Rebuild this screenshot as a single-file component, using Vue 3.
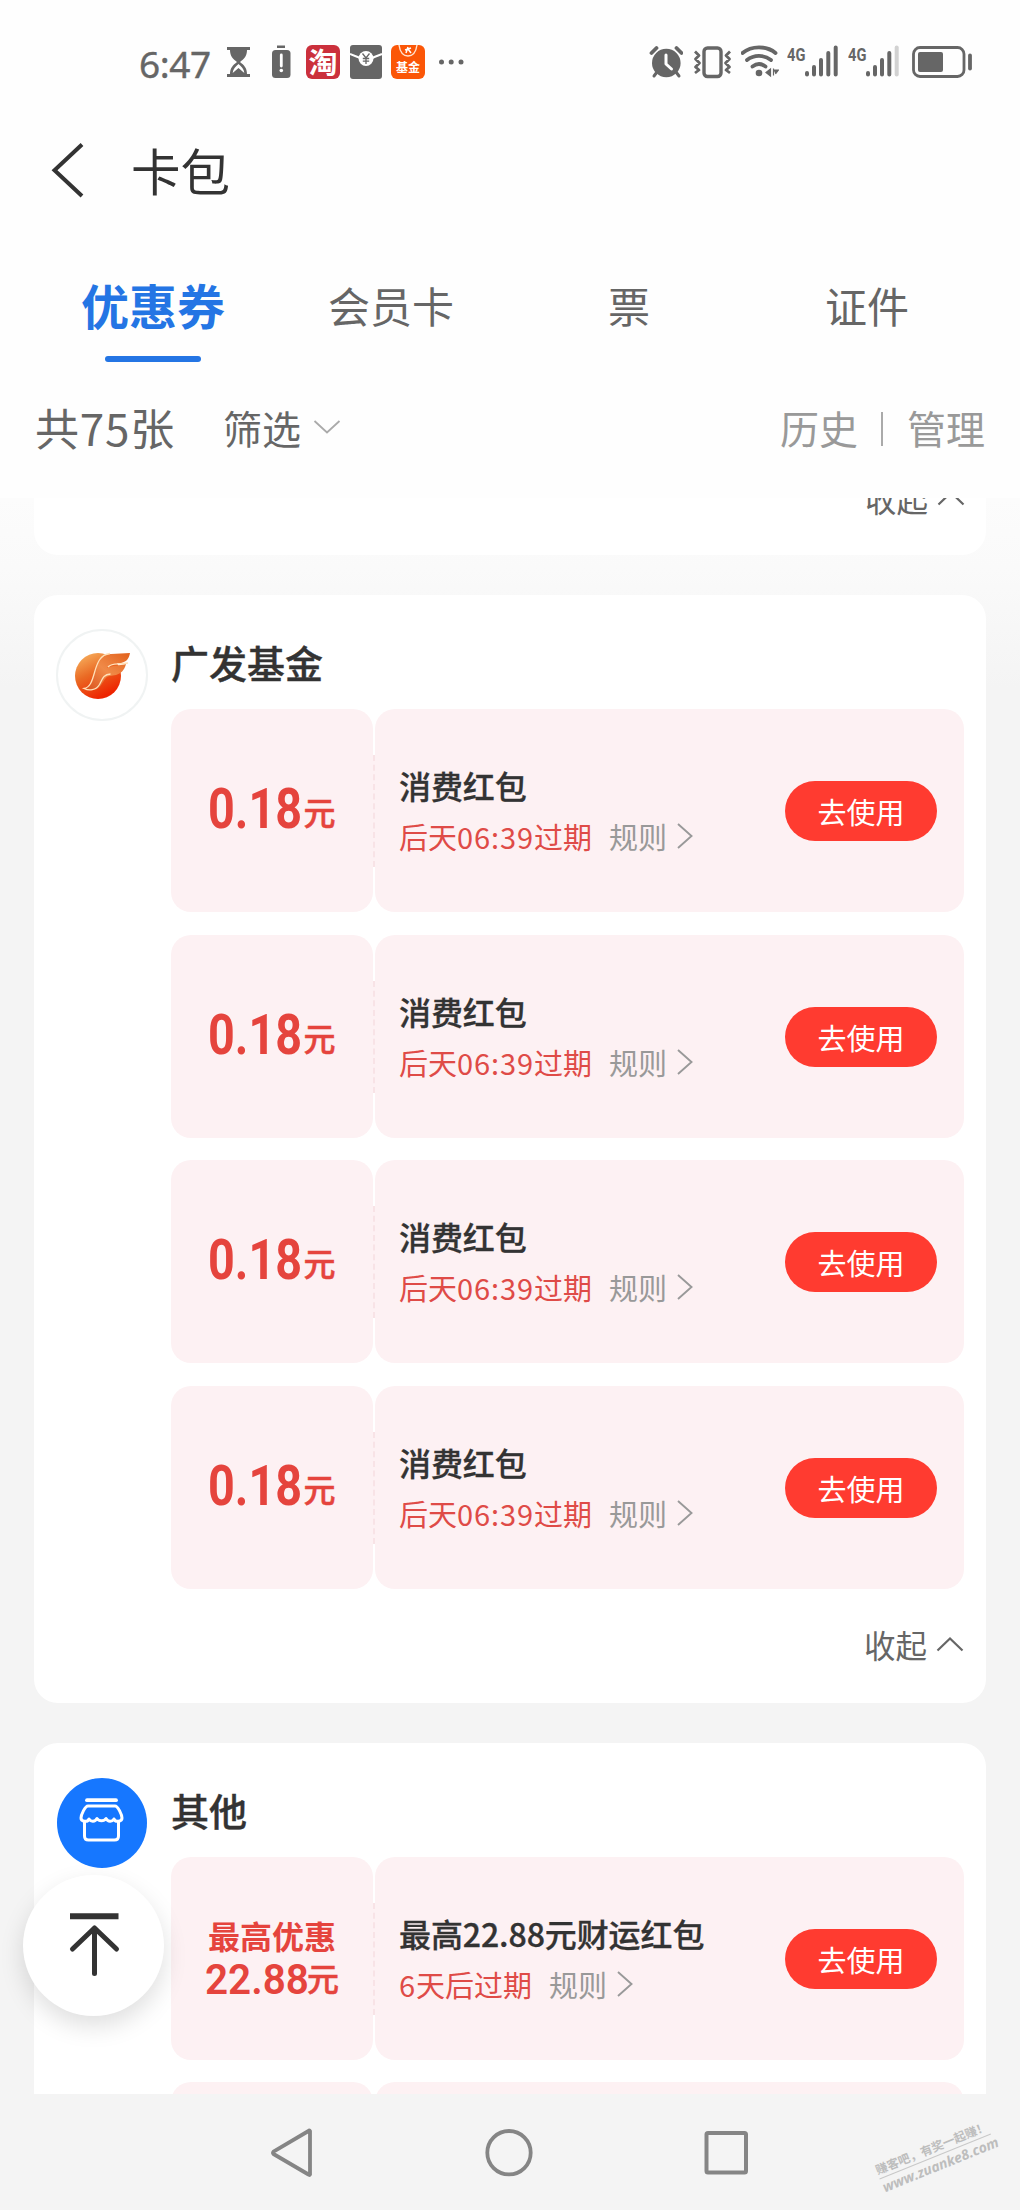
<script setup>
const tabs = ['优惠券', '会员卡', '票', '证件']
const fundCoupons = Array.from({ length: 4 }, () => ({
  amount: '0.18',
  title: '消费红包',
  expiry: ['后天', '06:39', '过期'],
}))
const groups = [
  { name: '广发基金', logo: 'fund', coupons: fundCoupons, foldable: true },
  {
    name: '其他',
    logo: 'shop',
    coupons: [
      { label: '最高优惠', amount: '22.88', title: '最高22.88元财运红包', expiry: ['', '6', '天后过期'] },
      { pending: true },
    ],
    foldable: false,
  },
]
</script>

<template>
  <div class="screen">
    <header class="status">
      <div class="status-left">
        <span class="time">6:47</span>
        <svg class="hourglass" width="24" height="34" viewBox="227 46 24 34">
          <path d="M227 48h23v3h-23zM227 75h23v3h-23z" fill="#666" />
          <path d="M230 51h17c0 6-3 9-7 12 4 3 7 6 7 12h-17c0-6 3-9 7-12-4-3-7-6-7-12z" fill="#666" />
          <path d="M238.500 65c-3 2.500-5.500 5-5.800 9l5.800-5 5.800 5c-.3-4-2.800-6.500-5.800-9z" fill="#fff" />
        </svg>
        <svg class="lowbat" width="20" height="34" viewBox="271 46 20 34">
          <rect x="277" y="46.500" width="8" height="2.500" fill="#666" />
          <rect x="272" y="51" width="18.500" height="28" rx="3.500" fill="#666" />
          <path d="M281.300 56v11" stroke="#fff" stroke-width="2.800" stroke-linecap="round" />
          <circle cx="281.300" cy="71.500" r="1.800" fill="#fff" />
        </svg>
        <span class="app tao">淘</span>
        <svg class="envelope" width="33" height="34" viewBox="350 45 33 34">
          <rect x="350" y="45" width="32" height="34" rx="3" fill="#666" />
          <path d="M350 54q8 3 12 5M382 54q-8 3-12 5" stroke="#fff" stroke-width="2" fill="none" />
          <circle cx="366" cy="58.500" r="7.500" fill="#fff" />
          <path d="M362.500 53.500l3.500 4.500 3.500-4.500M366 58v6M362.800 58.500h6.400M362.800 61.200h6.400" stroke="#666" stroke-width="1.300" fill="none" />
        </svg>
        <span class="app fund">
          <svg width="20" height="13" viewBox="0 0 20 13">
            <path d="M1 0c1 7 4 11 9 11s8-4 9-11" fill="none" stroke="#ffe3d0" stroke-width="1.400" />
            <path d="M7 5l6-2M10 2l-2 6M10 4l3 4" stroke="#fff" stroke-width="1.500" />
          </svg>
          <span>基金</span>
        </span>
        <svg class="more" width="26" height="8" viewBox="439 58 26 8">
          <circle cx="441.500" cy="62" r="2.500" fill="#666" /><circle cx="451.200" cy="62" r="2.500" fill="#666" /><circle cx="461" cy="62" r="2.500" fill="#666" />
        </svg>
      </div>
      <div class="status-right">
        <svg width="34" height="34" viewBox="650 46 34 34">
          <circle cx="667.300" cy="64" r="14.300" fill="#666" />
          <path d="M652.500 54l5-5M682.500 54l-5-5" stroke="#666" stroke-width="3.800" stroke-linecap="round" />
          <path d="M658 73l-3 4M677 73l3 4" stroke="#666" stroke-width="3" stroke-linecap="round" />
          <path d="M667 56v9l5.500 5" stroke="#fff" stroke-width="3" stroke-linecap="round" stroke-linejoin="round" fill="none" />
        </svg>
        <svg class="vibrate" width="40" height="34" viewBox="694 46 40 34">
          <rect x="705" y="49" width="17" height="28.500" rx="3.500" fill="none" stroke="#666" stroke-width="3.400" />
          <path d="M696 52.500l4 4-3.500 3.500 4 4-4 4 3.500 3-4 3M731 52.500l-4 4 3.500 3.500-4 4 4 4-3.500 3 4 3" fill="none" stroke="#666" stroke-width="2.800" stroke-linejoin="round" />
        </svg>
        <svg class="wifi" width="38" height="34" viewBox="742 46 38 34">
          <path d="M743.500 54c9-7.500 24-7.500 33 0M748 61c7-5.500 17-5.500 24 0M753.500 67.500c4-3 9-3 13 0" fill="none" stroke="#666" stroke-width="3.800" stroke-linecap="round" />
          <circle cx="760" cy="74" r="3.300" fill="#666" />
          <path d="M771.500 70v7l-4.500-3.500zM774.500 69.500v7M774.500 71h5l-3 4" fill="#666" stroke="#666" stroke-width="1.200" />
        </svg>
        <span class="net">4G</span>
        <svg class="bars" width="35" height="34" viewBox="804 46 35 34">
          <path d="M807 74v1.500M814 68v7.500M821 61v14.500M828.300 54v21.500M835.700 48.500v27" stroke="#666" stroke-width="4" stroke-linecap="round" />
        </svg>
        <span class="net second">4G</span>
        <svg class="bars" width="35" height="34" viewBox="804 46 35 34">
          <path d="M807 74v1.500M814 68v7.500M821 61v14.500M828.300 54v21.500" stroke="#666" stroke-width="4" stroke-linecap="round" />
          <path d="M835.700 48.500v27" stroke="#d2d2d2" stroke-width="4" stroke-linecap="round" />
        </svg>
        <svg class="battery" width="62" height="34" viewBox="910 46 62 34">
          <rect x="912.500" y="48.500" width="50.500" height="29" rx="6.500" fill="none" stroke="#666" stroke-width="2.800" />
          <rect x="917" y="53" width="25" height="20" rx="2" fill="#666" />
          <path d="M969 56.500v13" stroke="#666" stroke-width="3.800" stroke-linecap="round" />
        </svg>
      </div>
    </header>

    <div class="titlebar">
      <svg width="36" height="56" viewBox="50 142 36 56">
        <path d="M82 144.500L54.500 170.200 82 196" fill="none" stroke="#333" stroke-width="4" />
      </svg>
      <h1>卡包</h1>
    </div>

    <nav class="tabs">
      <div v-for="(t, i) in tabs" :key="t" class="tab" :class="{ active: i === 0 }">{{ t }}</div>
    </nav>

    <div class="filter">
      <span class="count">共75张</span>
      <span class="pick">筛选</span>
      <svg class="down" width="28" height="16" viewBox="0 0 28 16"><path d="M1.500 2L14 13.500 26.500 2" fill="none" stroke="#aaa" stroke-width="1.800" /></svg>
      <span class="link">历史</span>
      <i class="bar"></i>
      <span class="link">管理</span>
    </div>

    <main class="list">
      <section class="card tail">
        <div class="fold">收起<svg width="28" height="16" viewBox="0 0 28 16"><path d="M1.500 14.500L14 2.500 26.500 14.500" fill="none" stroke="#666" stroke-width="2.200" /></svg></div>
      </section>

      <section v-for="g in groups" :key="g.name" class="card group">
        <div class="logo" :class="g.logo">
          <svg v-if="g.logo === 'fund'" width="56" height="48" viewBox="73 650 56 48">
            <defs>
              <linearGradient id="ball" x1="0" y1="0" x2=".5" y2="1">
                <stop offset="0" stop-color="#f9bc68" /><stop offset=".5" stop-color="#ea6a24" /><stop offset="1" stop-color="#ee2400" />
              </linearGradient>
              <linearGradient id="wing" x1="1" y1="0" x2="0" y2="1">
                <stop offset="0" stop-color="#e2611c" /><stop offset=".5" stop-color="#f08a48" /><stop offset="1" stop-color="#d9501c" />
              </linearGradient>
            </defs>
            <circle cx="97" cy="675" r="23" fill="url(#ball)" />
            <path d="M83 688c6-1 8-7 10-15 3-12 7-20 17-20l19-1c-1 6-4 9-9 10-6 .5-11 0-14 5 6-3 12-2 19-4-2 7-5 9-10 11-5 1-8 0-11 4-4 6-6 12-14 11-3 0-5-.5-7-1z" fill="url(#wing)" />
            <path d="M109 652.500c-10 1-13 10-15.500 19-2.500 9-4.500 15-10.500 16 5 2.500 12 2 15.500-4 3-6 4-10 11-10.500M107 666c4-4.500 10-2 20-4" fill="none" stroke="#ffe0b8" stroke-width="1.300" />
          </svg>
          <svg v-else width="46" height="46" viewBox="79 1796 46 46">
            <g fill="none" stroke="#fff" stroke-width="3" stroke-linecap="round" stroke-linejoin="round">
              <path d="M87 1800.200h29" stroke-width="3.800" />
              <path d="M88 1806h27c3 0 7 9 7 12 0 4-7 4.500-8 1-2 3-6 3-8-.5-2 3-7 3-9 0-2 3.500-6 3.500-8 .5-1 3.500-8 3-8-1 0-3 4-12 7-12z" />
              <path d="M84.500 1822v14q0 4 4 4h26q4 0 4-4v-14" />
            </g>
          </svg>
        </div>
        <div class="body">
          <h2>{{ g.name }}</h2>
          <div class="coupons">
            <article v-for="(c, i) in g.coupons" :key="i" class="coupon">
              <div class="value" :class="{ max: c.label }">
                <template v-if="!c.pending">
                  <div v-if="c.label" class="label">{{ c.label }}</div>
                  <div class="money"><span class="num"><b>{{ c.amount }}</b></span><span class="yuan">元</span></div>
                </template>
              </div>
              <div class="info">
                <template v-if="!c.pending">
                  <div class="text">
                    <h3>{{ c.title }}</h3>
                    <p>
                      <span class="expiry">{{ c.expiry[0] }}<span class="digits">{{ c.expiry[1] }}</span>{{ c.expiry[2] }}</span>
                      <span class="rule">规则</span>
                      <svg width="18" height="28" viewBox="0 0 18 28"><path d="M2 2L15.500 14 2 26" fill="none" stroke="#999" stroke-width="1.900" /></svg>
                    </p>
                  </div>
                  <button>去使用</button>
                </template>
              </div>
            </article>
          </div>
          <div v-if="g.foldable" class="fold">收起<svg width="28" height="16" viewBox="0 0 28 16"><path d="M1.500 14.500L14 2.500 26.500 14.500" fill="none" stroke="#666" stroke-width="2.200" /></svg></div>
        </div>
      </section>
    </main>

    <div class="totop">
      <svg width="54" height="66" viewBox="66 1911 54 66">
        <path d="M69 1916.200h48.500" stroke="#333" stroke-width="6" />
        <path d="M93.500 1928v45.500M71.500 1949L93.500 1928l22 21" fill="none" stroke="#333" stroke-width="5" stroke-linecap="round" stroke-linejoin="round" />
      </svg>
    </div>

    <footer class="navbar">
      <svg width="48" height="52" viewBox="268 2127 48 52"><path d="M310 2131v43.500q-.5 1-1.500 0L273.500 2154q-1-1.200 0-2.400L308.500 2131q1-1 1.500 0z" fill="none" stroke="#858585" stroke-width="3.800" stroke-linejoin="round" /></svg>
      <svg width="50" height="52" viewBox="485 2127 50 52"><circle cx="510" cy="2152.700" r="21.700" fill="none" stroke="#858585" stroke-width="3.800" /></svg>
      <svg width="48" height="52" viewBox="702 2127 48 52"><rect x="706.500" y="2133" width="39.500" height="39.500" rx="1.500" fill="none" stroke="#858585" stroke-width="4" /></svg>
    </footer>

    <div class="mark">
      <div class="slogan">赚客吧，有奖一起赚！</div>
      <div class="site">www.zuanke8.com</div>
    </div>
  </div>
</template>

<style>
body { margin: 0; background: #f4f4f4; }
</style>

<style scoped>
* { box-sizing: border-box; }
.screen {
  position: relative;
  width: 1020px;
  height: 2210px;
  overflow: hidden;
  display: flex;
  flex-direction: column;
  background: #fefefe;
  color: #333;
  font-family: "Noto Sans CJK SC", sans-serif;
}
svg { display: block; flex: none; }
h1, h2, h3, p { margin: 0; }

.status { height: 124px; padding: 45px 47px 0 139px; display: flex; justify-content: space-between; align-items: flex-start; flex: none; }
.status-left, .status-right { display: flex; height: 34px; align-items: center; }
.time { width: 88px; font: 400 37px/36px "Noto Sans", sans-serif; color: #666; letter-spacing: -.4px; padding-top: 3px; -webkit-text-stroke: .4px #666; }
.lowbat { margin-left: 20px; }
.app { width: 34px; height: 34px; border-radius: 6px; color: #fff; flex: none; }
.tao { margin-left: 15px; background: #cb303c; font-size: 29px; line-height: 32px; text-align: center; font-weight: 700; }
.envelope { margin-left: 10px; }
.fund { margin-left: 8px; background: #fb5607; display: flex; flex-direction: column; align-items: center; }
.fund span { font: 700 12px/18px "Noto Sans CJK SC", sans-serif; }
.more { margin-left: 14px; }
.vibrate { margin-left: 10px; }
.wifi { margin-left: 8px; }
.net { width: 17px; margin-left: 8px; height: 34px; font: 700 19px/20px Roboto, sans-serif; color: #666; transform: scaleX(.77); transform-origin: 0 0; }
.net.second { margin-left: 9px; }
.battery { margin-left: 11px; }

.titlebar { height: 92px; padding-left: 50px; display: flex; align-items: center; flex: none; }
.titlebar h1 { margin-left: 45px; font-size: 49.500px; line-height: 60px; font-weight: 400; }

.tabs { height: 147px; padding: 56px 34px 0; display: flex; flex: none; }
.tab { width: 238px; height: 91px; text-align: center; font-size: 42px; line-height: 65px; color: #666; display: flex; flex-direction: column; }
.tab.active { font-size: 48px; font-weight: 700; color: #2475e4; }
.tab.active::after { content: ""; width: 96px; height: 6px; border-radius: 3px; background: #2475e4; margin: 19px auto 0; flex: none; }

.filter { height: 135px; padding: 0 35px 7px 35px; display: flex; align-items: center; color: #666; font-size: 39px; flex: none; }
.count { font-size: 44px; width: 188px; white-space: nowrap; letter-spacing: .8px; }
.down { margin: 0 auto 0 12px; }
.link { color: #999; }
.bar { width: 2px; height: 34px; background: #aaa; margin: 4px 24px 0 23px; }

.list { height: 1596px; padding: 0 34px; overflow: hidden; flex: none; background: linear-gradient(#fcfcfc 0, #fafafa 70px, #f4f4f4 190px); }
.card { background: #fff; border-radius: 24px; }
.tail { height: 57px; border-radius: 0 0 24px 24px; display: flex; justify-content: flex-end; align-items: flex-end; padding: 0 21px 33px 0; }
.fold { display: flex; justify-content: flex-end; align-items: center; font-size: 31.500px; line-height: 48px; color: #666; gap: 9px; }
.group { margin-top: 40px; display: flex; padding: 34px 22px 0; }
.logo { width: 92px; height: 92px; border-radius: 50%; flex: none; display: flex; align-items: center; justify-content: center; }
.logo.fund { margin-left: 0; border: 2px solid #f0f3f3; background: #fff; }
.logo.shop { width: 90px; height: 90px; margin: 1px 1px 0; background: #1677ff; }
.shop svg { margin-top: -7px; }
.body { margin-left: 23px; width: 793px; padding-bottom: 35px; }
h2 { height: 80px; font-size: 38px; line-height: 66px; font-weight: 500; -webkit-text-stroke: .4px #333; }
.coupons { display: flex; flex-direction: column; gap: 22.500px; }
.coupon { display: flex; gap: 2px; height: 203px; position: relative; }
.coupon::before { content: ""; position: absolute; left: 201px; top: 46px; height: 112px; width: 4px; background: #fdf1f3; z-index: 1; }
.coupon::after { content: ""; position: absolute; left: 202px; top: 46px; height: 112px; border-left: 2px dashed #f8e3e6; z-index: 2; }
.value { width: 202px; border-radius: 20px; background: #fdf1f3; color: #e5443d; display: flex; flex-direction: column; align-items: center; padding-top: 70px; }
.money { display: flex; align-items: baseline; line-height: 60px; height: 60px; }
.num { width: 95px; display: block; }
.num b { display: inline-block; font: 700 55px/60px Roboto, sans-serif; transform: scaleX(.85); transform-origin: 0 50%; white-space: nowrap; }
.yuan { font-size: 32px; font-weight: 500; line-height: 40px; transform: translateY(-3px); -webkit-text-stroke: .5px #e5443d; }
.max { padding-top: 55px; }
.max .label { font-size: 32px; line-height: 46px; font-weight: 700; }
.max .money { height: 42px; line-height: 42px; }
.max .num { width: 102px; }
.max .num b { font-size: 43px; font-weight: 600; line-height: 42px; transform: scaleX(.94); }
.info { width: 589px; border-radius: 20px; background: #fdf1f3; display: flex; justify-content: space-between; padding: 0 27px 0 24px; }
.text { padding-top: 52px; }
h3 { font-size: 32px; line-height: 49px; font-weight: 500; white-space: nowrap; letter-spacing: -.1px; -webkit-text-stroke: .3px #333; }
p { display: flex; align-items: center; height: 52px; font-size: 29px; color: #999; line-height: 52px; }
p svg { margin: 0 0 0 9px; }
.expiry { color: #df4b47; margin-right: 17px; }
.digits { letter-spacing: .9px; }
button { width: 152px; height: 60px; margin-top: 72px; border: 0; border-radius: 30px; background: #ff3b30; color: #fff; font: 400 29px/60px "Noto Sans CJK SC", sans-serif; padding: 0; }
.body .fold { margin-top: 31px; height: 48px; }

.totop { position: absolute; left: 23px; top: 1875px; width: 141px; height: 141px; border-radius: 50%; background: #fff; box-shadow: 0 10px 24px rgba(0, 0, 0, .13); display: flex; align-items: center; justify-content: center; padding-bottom: 3px; }

.navbar { height: 116px; flex: none; background: #f4f4f4; display: flex; justify-content: space-between; padding: 33px 270px 0 268px; }
.mark { position: absolute; left: 875px; top: 2138px; width: 120px; transform: rotate(-22deg); color: #bdbdbd; white-space: nowrap; }
.slogan { font-size: 12px; line-height: 18px; font-weight: 700; border-bottom: 1px solid #c8c8c8; }
.site { font: italic 700 14px/17px "Open Sans", sans-serif; }
</style>
